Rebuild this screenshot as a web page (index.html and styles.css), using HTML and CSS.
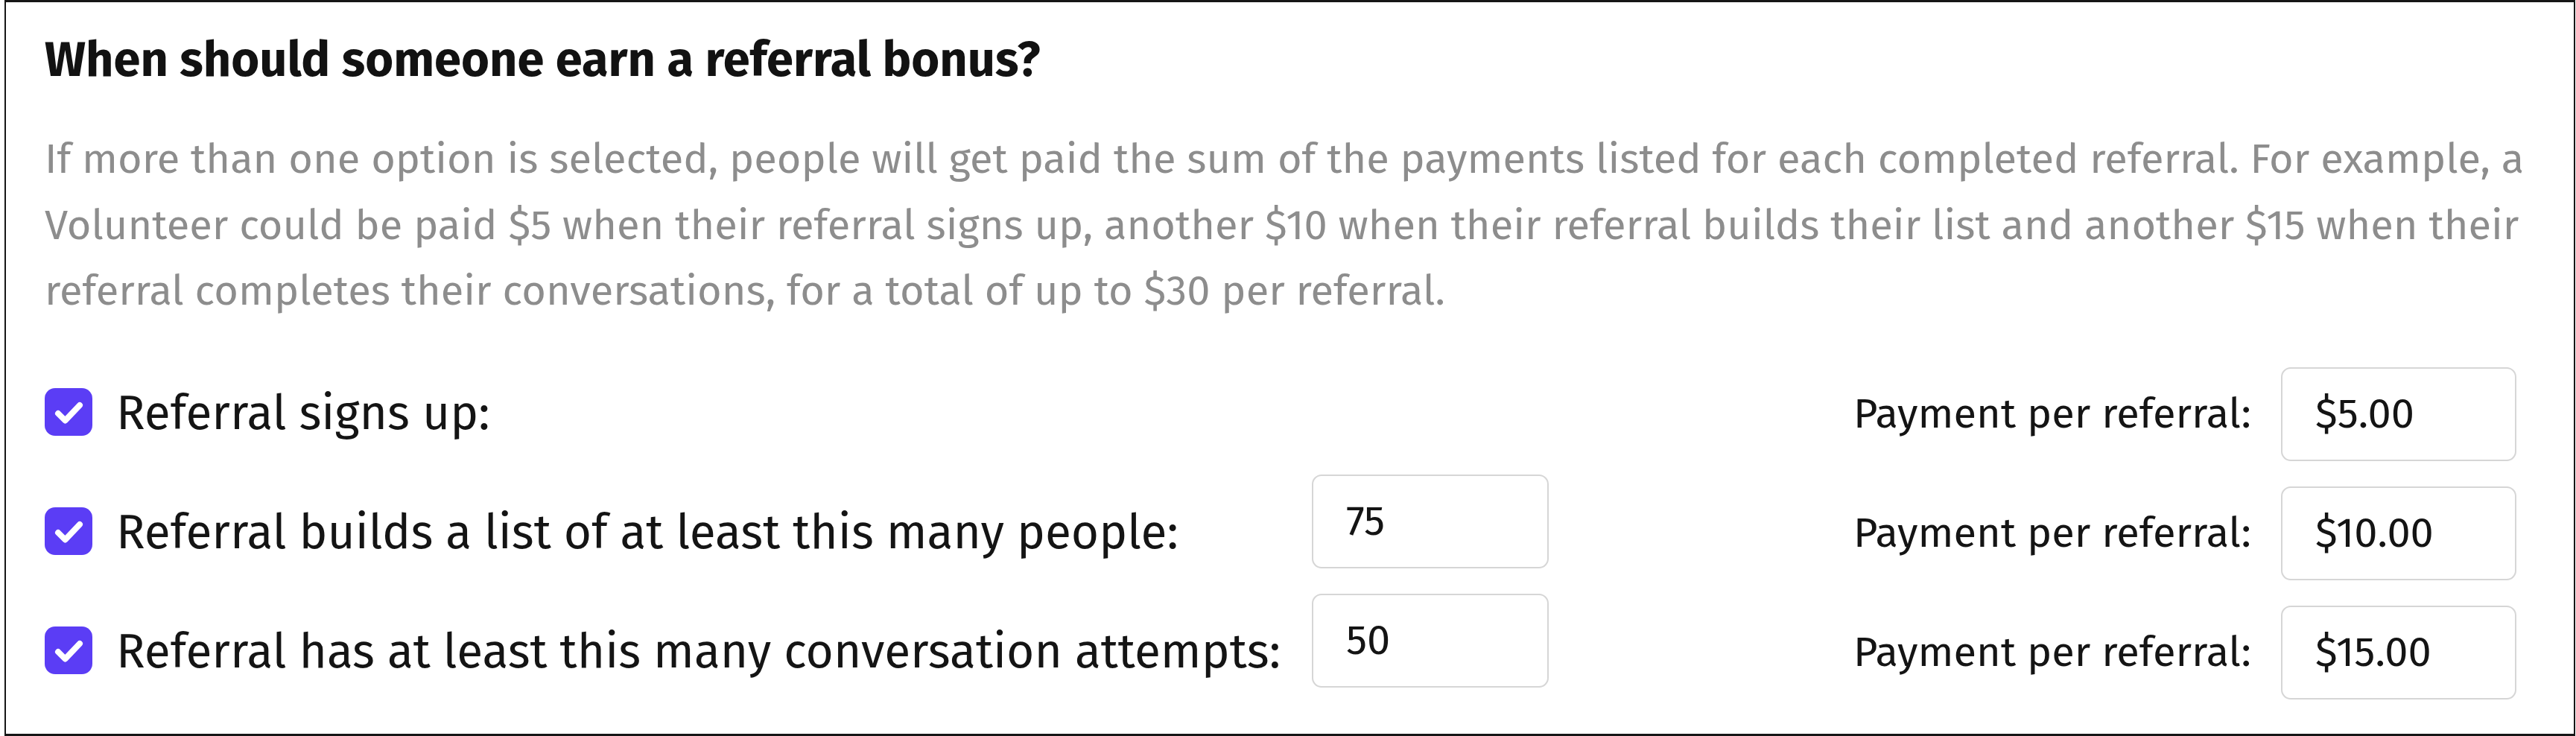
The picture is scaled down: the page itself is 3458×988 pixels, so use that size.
FILE: index.html
```html
<!DOCTYPE html>
<html lang="en">
<head>
<meta charset="utf-8">
<title>Referral bonus</title>
<link rel="stylesheet" href="styles.css">
</head>
<body>
<section class="card">
  <h2 class="title">When should someone earn a referral bonus?</h2>
  <p class="help">
    <span class="line">If more than one option is selected, people will get paid the sum of the payments listed for each completed referral. For example, a</span>
    <span class="line">Volunteer could be paid $5 when their referral signs up, another $10 when their referral builds their list and another $15 when their</span>
    <span class="line">referral completes their conversations, for a total of up to $30 per referral.</span>
  </p>
  <div class="rows">
    <div class="row">
      <label class="opt">
        <svg class="check" viewBox="0 0 64 64" aria-hidden="true"><rect width="64" height="64" rx="14" fill="#5b3df5"/><path d="M18 34 L27.5 43.5 L47 23" fill="none" stroke="#fff" stroke-width="8" stroke-linecap="round" stroke-linejoin="round"/></svg>
        <span class="opt-label">Referral signs up:</span>
      </label>
      <div class="empty"></div>
      <div class="spacer"></div>
      <span class="pay-label">Payment per referral:</span>
      <div class="field">$5.00</div>
    </div>
    <div class="row">
      <label class="opt">
        <svg class="check" viewBox="0 0 64 64" aria-hidden="true"><rect width="64" height="64" rx="14" fill="#5b3df5"/><path d="M18 34 L27.5 43.5 L47 23" fill="none" stroke="#fff" stroke-width="8" stroke-linecap="round" stroke-linejoin="round"/></svg>
        <span class="opt-label">Referral builds a list of at least this many people:</span>
      </label>
      <div class="field field-mid">75</div>
      <div class="spacer"></div>
      <span class="pay-label">Payment per referral:</span>
      <div class="field">$10.00</div>
    </div>
    <div class="row">
      <label class="opt">
        <svg class="check" viewBox="0 0 64 64" aria-hidden="true"><rect width="64" height="64" rx="14" fill="#5b3df5"/><path d="M18 34 L27.5 43.5 L47 23" fill="none" stroke="#fff" stroke-width="8" stroke-linecap="round" stroke-linejoin="round"/></svg>
        <span class="opt-label">Referral has at least this many conversation attempts:</span>
      </label>
      <div class="field field-mid">50</div>
      <div class="spacer"></div>
      <span class="pay-label">Payment per referral:</span>
      <div class="field">$15.00</div>
    </div>
  </div>
</section>
</body>
</html>
```

FILE: styles.css
```css
html, body {
  margin: 0;
  padding: 0;
  background: #ffffff;
}

body {
  font-family: "Fira Sans", "Open Sans", "Noto Sans", sans-serif;
  color: #141414;
}

.card {
  box-sizing: border-box;
  height: 988px;
  margin: 0 1px 0 6px;
  border: 2px solid #161616;
  border-top-width: 3px;
  border-bottom-width: 3px;
  padding: 38px 77px 0 52px;
  background: #ffffff;
}

.title {
  margin: 0;
  font-size: 65px;
  line-height: 78px;
  font-weight: 700;
  color: #121212;
}

.help {
  margin: 51px 0 0;
  font-size: 56px;
  line-height: 88.5px;
  color: #8d8d8d;
}

.line {
  display: block;
  white-space: nowrap;
}

.rows {
  margin-top: 57px;
  display: flex;
  flex-direction: column;
  gap: 34px;
}

.row {
  display: grid;
  grid-template-columns: 1661px 318px 1fr auto 316px;
  column-gap: 40px;
  align-items: center;
}

.opt {
  display: flex;
  align-items: center;
  gap: 32px;
}

.check {
  width: 64px;
  height: 64px;
  flex: none;
  margin-bottom: 4px;
}

.opt-label {
  font-size: 64px;
  line-height: 76.8px;
  color: #141414;
  white-space: nowrap;
}

.pay-label {
  font-size: 56px;
  line-height: 67.2px;
  color: #141414;
  white-space: nowrap;
}

.field {
  box-sizing: border-box;
  height: 126px;
  display: flex;
  align-items: center;
  padding-left: 44px;
  border: 2px solid #d6d6d6;
  border-radius: 13px;
  font-size: 56px;
  line-height: 67.2px;
  color: #141414;
  background: #ffffff;
}

.field-mid {
  margin: -16px 0 16px;
}
```
